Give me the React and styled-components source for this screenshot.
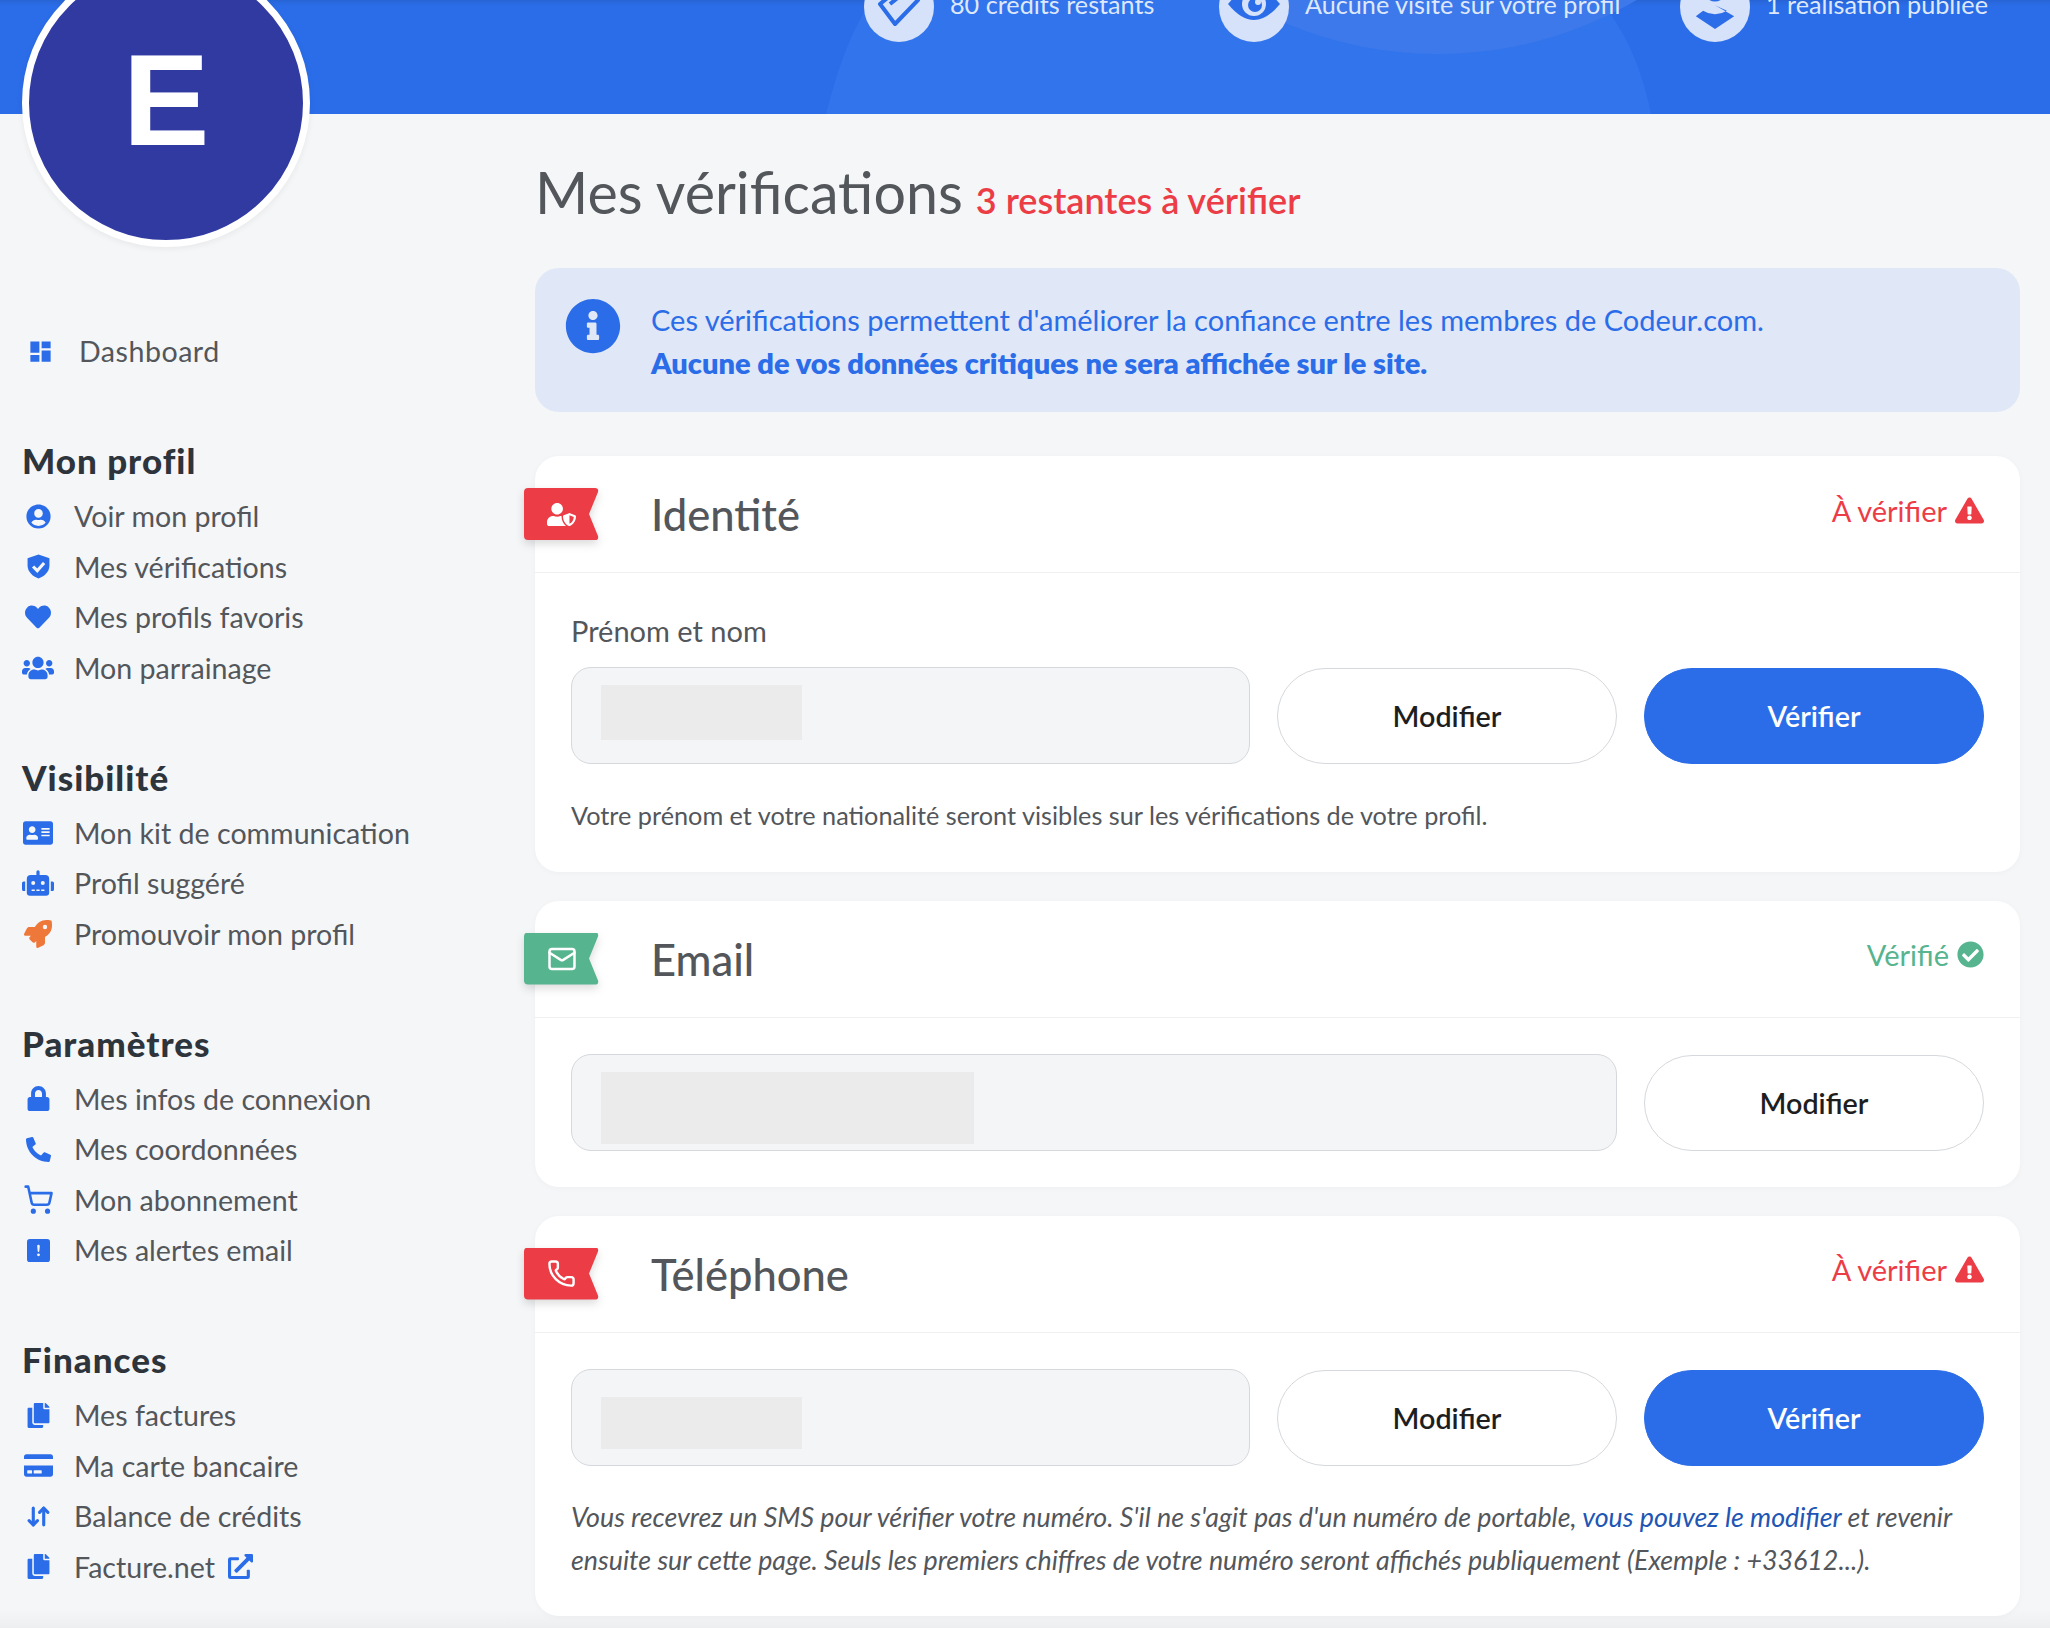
import React from 'react';
import styled, { createGlobalStyle } from 'styled-components';
import {
  FaUserCircle, FaHeart, FaUsers, FaAddressCard, FaRobot, FaRocket, FaLock, FaPhoneAlt,
  FaCopy, FaCreditCard, FaExternalLinkAlt, FaUserShield, FaExclamationTriangle,
  FaCheckCircle, FaInfoCircle,
} from 'react-icons/fa';
import { MdDashboard } from 'react-icons/md';
import { BsExclamationSquareFill } from 'react-icons/bs';
import { ShoppingCart, ArrowDownUp, Mail, Phone } from 'lucide-react';

const blue = '#2b6de8';
const red = '#ec3d47';
const green = '#56b48f';
const ink = '#53565a';
const font = `Lato, "Noto Sans", sans-serif`;

const GlobalStyle = createGlobalStyle`
  html, body { margin: 0; padding: 0; }
  body {
    background: #f5f6f8;
    font-family: ${font};
    color: ${ink};
    overflow: hidden;
  }
  * { box-sizing: border-box; }
`;

const Page = styled.div`
  width: 2050px;
  height: 1628px;
  overflow: hidden;
  background: linear-gradient(to top, #eceef0, #f5f6f8 18px);
`;

const Header = styled.header`
  position: relative;
  height: 114px;
  overflow: hidden;
  background: ${blue};
  box-shadow: inset 0 6px 5px -4px rgba(0, 0, 0, 0.1);
  display: grid;
  grid-template-columns: 355px 461px 1fr;
  padding-left: 864px;
`;

const HeaderDecor = styled.svg`
  position: absolute;
  left: 0;
  top: 0;
`;

const Stat = styled.div`
  position: relative;
  display: flex;
  align-items: center;
  gap: 16px;
  height: 70px;
  margin-top: -28px;
  font-size: 25.2px;
  color: #dfe8fb;
  white-space: nowrap;
`;

const StatText = styled.span`
  margin-top: -7px;
`;

const StatBadge = styled.div`
  width: 70px;
  height: 70px;
  flex: none;
  border-radius: 50%;
  background: #d6e2f9;
  display: flex;
  align-items: center;
  justify-content: center;
`;

const Body = styled.div`
  display: flex;
`;

const Sidebar = styled.aside`
  position: relative;
  width: 535px;
  flex: none;
  padding-left: 22px;
  margin-top: -155px;
`;

const Avatar = styled.div`
  width: 288px;
  height: 288px;
  padding-bottom: 6px;
  border-radius: 50%;
  background: #303aa1;
  border: 7px solid #fff;
  box-shadow: 0 2px 6px rgba(0, 0, 0, 0.06);
  color: #fff;
  font-family: "Liberation Sans", sans-serif;
  font-weight: 700;
  font-size: 130px;
  display: flex;
  align-items: center;
  justify-content: center;
`;

const NavItem = styled.a`
  height: 50.5px;
  display: flex;
  align-items: center;
  gap: 20px;
  font-size: 28.6px;
  color: ${ink};
  white-space: nowrap;
`;

const DashboardLink = styled(NavItem)`
  margin-top: 79px;
  padding-left: 2px;
  gap: 23px;
  letter-spacing: 0.5px;
`;

const NavIcon = styled.span`
  width: 32px;
  flex: none;
  display: flex;
  justify-content: center;
  color: ${p => p.$color || blue};
`;

const NavSection = styled.nav`
  margin-top: 63.5px;
`;

const NavTitle = styled.h3`
  margin: 0 0 11px;
  height: 40px;
  line-height: 40px;
  font-size: 35px;
  font-weight: 900;
  letter-spacing: 1px;
  color: #2e343b;
`;

const ExternalIcon = styled(FaExternalLinkAlt)`
  color: ${blue};
  margin-left: -7px;
`;

const Main = styled.main`
  width: 1485px;
  flex: none;
  padding-top: 44px;
`;

const PageTitle = styled.h1`
  margin: 0 0 43px;
  height: 67px;
  line-height: 67px;
  font-size: 57.4px;
  font-weight: 400;
  color: ${ink};
  white-space: nowrap;
`;

const Remaining = styled.span`
  margin-left: 13px;
  font-size: 36px;
  font-weight: 600;
  color: ${red};
`;

const Notice = styled.div`
  display: flex;
  align-items: flex-start;
  gap: 30px;
  height: 144px;
  padding: 30px 29px;
  margin-bottom: 44px;
  border-radius: 24px;
  background: #e0e7f6;
  color: ${blue};
  font-size: 29px;
  line-height: 43px;
`;

const NoticeIcon = styled(FaInfoCircle)`
  flex: none;
  margin-left: 1px;
`;

const Strong = styled.strong`
  font-weight: 800;
`;

const Card = styled.section`
  position: relative;
  margin-bottom: 29px;
  border-radius: 24px;
  background: #fff;
  box-shadow: 0 1px 6px rgba(30, 40, 60, 0.03);
`;

const CardHeader = styled.div`
  height: 117px;
  padding: 0 36px 0 116px;
  border-bottom: 1px solid #eff0f2;
  display: flex;
  align-items: center;
  justify-content: space-between;
`;

const CardTitle = styled.h2`
  margin: 0;
  font-size: 43.5px;
  font-weight: 500;
  color: ${ink};
`;

const Status = styled.div`
  margin-top: -8px;
  display: flex;
  align-items: center;
  gap: 8px;
  font-size: 29px;
  color: ${p => p.$color};
`;

const RibbonShadow = styled.div`
  position: absolute;
  left: -11px;
  top: 32px;
  filter: drop-shadow(0 4px 4px rgba(0, 0, 0, 0.14));
`;

const Ribbon = styled.div`
  width: 75px;
  height: 52px;
  background: ${p => p.$color};
  color: #fff;
  display: flex;
  align-items: center;
  justify-content: center;
  clip-path: path('M4 0 H71 Q75 0 74 4 L65 26 L74 48 Q75 52 71 52 H4 Q0 52 0 48 V4 Q0 0 4 0 Z');
`;

const CardBody = styled.div`
  padding: ${p => p.$top || 36}px 36px ${p => p.$bottom || 36}px;
`;

const Label = styled.div`
  height: 36px;
  line-height: 36px;
  margin-bottom: 18px;
  font-size: 29px;
`;

const FieldRow = styled.div`
  display: flex;
  gap: 27px;
`;

const Field = styled.div`
  flex: 1;
  height: 97px;
  padding-left: 29px;
  border: 1px solid #d5d8dc;
  border-radius: 20px;
  background: #f4f5f7;
`;

const Redacted = styled.div`
  width: ${p => p.$w}px;
  height: ${p => p.$h}px;
  margin-top: ${p => p.$top}px;
  background: #ebebeb;
`;

const Button = styled.button`
  width: 340px;
  height: 96px;
  margin-top: 1px;
  flex: none;
  padding: 0;
  border-radius: 48px;
  border: 1px solid ${p => (p.$primary ? blue : '#d5d8dc')};
  background: ${p => (p.$primary ? blue : '#fff')};
  color: ${p => (p.$primary ? '#fff' : '#1e1e1e')};
  font-family: ${font};
  font-size: 28.7px;
  font-weight: 600;
`;

const Hint = styled.p`
  margin: 30px 0 0;
  font-size: ${p => (p.$italic ? 26.8 : 25.25)}px;
  line-height: 43.5px;
  font-style: ${p => (p.$italic ? 'italic' : 'normal')};
  color: ${ink};
`;

const HintLink = styled.a`
  color: #2156b4;
`;

const TicketIcon = () => (
  <svg width="46" height="46" viewBox="0 0 46 46" fill="none" stroke={blue} strokeWidth="4" strokeLinejoin="round">
    <path d="M19 40 L4 20 L26 2 L42 16 Z" />
    <path d="M14 20 L24 12" />
  </svg>
);

const EyeIcon = () => (
  <svg width="56" height="46" viewBox="0 0 56 46">
    <path d="M2 20 Q28 -12 54 20 Q28 52 2 20 Z" fill={blue} />
    <circle cx="28" cy="20" r="12" fill="#d6e2f9" />
    <circle cx="29" cy="21" r="7" fill={blue} />
    <circle cx="32" cy="18" r="3" fill="#d6e2f9" />
  </svg>
);

const BadgeIcon = () => (
  <svg width="42" height="52" viewBox="0 0 46 56" fill={blue}>
    <circle cx="23" cy="10" r="12" />
    <path d="M23 26 L44 38 L23 52 L2 38 L10 32 Q23 40 36 32 Z" />
  </svg>
);

const ShieldCheckIcon = () => (
  <svg width="25" height="25" viewBox="0 0 24 24">
    <path d="M12 .5 L22.5 4 V11 C22.5 17 17.5 21.5 12 23.5 C6.5 21.5 1.5 17 1.5 11 V4 Z" fill={blue} />
    <path d="M6.8 12 L10.8 16 L17.4 8.6" fill="none" stroke="#f5f6f8" strokeWidth="3" />
  </svg>
);

const navGroups = [
  {
    title: 'Mon profil',
    items: [
      { label: 'Voir mon profil', icon: <FaUserCircle size={25} /> },
      { label: 'Mes vérifications', icon: <ShieldCheckIcon /> },
      { label: 'Mes profils favoris', icon: <FaHeart size={26} /> },
      { label: 'Mon parrainage', icon: <FaUsers size={32} /> },
    ],
  },
  {
    title: 'Visibilité',
    items: [
      { label: 'Mon kit de communication', icon: <FaAddressCard size={30} /> },
      { label: 'Profil suggéré', icon: <FaRobot size={32} /> },
      { label: 'Promouvoir mon profil', icon: <FaRocket size={28} />, color: '#ee773a' },
    ],
  },
  {
    title: 'Paramètres',
    items: [
      { label: 'Mes infos de connexion', icon: <FaLock size={25} /> },
      { label: 'Mes coordonnées', icon: <FaPhoneAlt size={25} /> },
      { label: 'Mon abonnement', icon: <ShoppingCart size={31} strokeWidth={2} /> },
      { label: 'Mes alertes email', icon: <BsExclamationSquareFill size={23} /> },
    ],
  },
  {
    title: 'Finances',
    items: [
      { label: 'Mes factures', icon: <FaCopy size={25} /> },
      { label: 'Ma carte bancaire', icon: <FaCreditCard size={29} /> },
      { label: 'Balance de crédits', icon: <ArrowDownUp size={25} strokeWidth={3} /> },
      { label: 'Facture.net', icon: <FaCopy size={25} />, external: true },
    ],
  },
];

const toVerify = (
  <Status $color={red}>
    À vérifier <FaExclamationTriangle size={29} />
  </Status>
);

const App = () => (
  <Page>
    <GlobalStyle />
    <Header>
      <HeaderDecor width="2050" height="114" viewBox="0 0 2050 114">
        <path d="M826 114 C840 60 855 20 880 -10 L1590 -10 C1620 20 1640 60 1651 114 Z" fill="#3174ec" />
        <circle cx="1438" cy="-339" r="393" fill="#3d79ea" />
      </HeaderDecor>
      <Stat><StatBadge><TicketIcon /></StatBadge><StatText>80 crédits restants</StatText></Stat>
      <Stat><StatBadge><EyeIcon /></StatBadge><StatText>Aucune visite sur votre profil</StatText></Stat>
      <Stat><StatBadge><BadgeIcon /></StatBadge><StatText>1 réalisation publiée</StatText></Stat>
    </Header>
    <Body>
      <Sidebar>
        <Avatar>E</Avatar>
        <DashboardLink>
          <NavIcon><MdDashboard size={27} /></NavIcon>
          Dashboard
        </DashboardLink>
        {navGroups.map(group => (
          <NavSection key={group.title}>
            <NavTitle>{group.title}</NavTitle>
            {group.items.map(item => (
              <NavItem key={item.label}>
                <NavIcon $color={item.color}>{item.icon}</NavIcon>
                {item.label}
                {item.external && <ExternalIcon size={25} />}
              </NavItem>
            ))}
          </NavSection>
        ))}
      </Sidebar>
      <Main>
        <PageTitle>
          Mes vérifications<Remaining>3 restantes à vérifier</Remaining>
        </PageTitle>
        <Notice>
          <NoticeIcon size={56} />
          <div>
            Ces vérifications permettent d'améliorer la confiance entre les membres de Codeur.com.
            <br />
            <Strong>Aucune de vos données critiques ne sera affichée sur le site.</Strong>
          </div>
        </Notice>

        <Card>
          <RibbonShadow>
            <Ribbon $color={red}><FaUserShield size={29} /></Ribbon>
          </RibbonShadow>
          <CardHeader>
            <CardTitle>Identité</CardTitle>
            {toVerify}
          </CardHeader>
          <CardBody $top={40} $bottom={34}>
            <Label>Prénom et nom</Label>
            <FieldRow>
              <Field><Redacted $w={201} $h={55} $top={17} /></Field>
              <Button>Modifier</Button>
              <Button $primary>Vérifier</Button>
            </FieldRow>
            <Hint>Votre prénom et votre nationalité seront visibles sur les vérifications de votre profil.</Hint>
          </CardBody>
        </Card>

        <Card>
          <RibbonShadow>
            <Ribbon $color={green}><Mail size={30} strokeWidth={2} /></Ribbon>
          </RibbonShadow>
          <CardHeader>
            <CardTitle>Email</CardTitle>
            <Status $color={green}>
              Vérifié <FaCheckCircle size={27} />
            </Status>
          </CardHeader>
          <CardBody>
            <FieldRow>
              <Field><Redacted $w={373} $h={72} $top={17} /></Field>
              <Button>Modifier</Button>
            </FieldRow>
          </CardBody>
        </Card>

        <Card>
          <RibbonShadow>
            <Ribbon $color={red}><Phone size={29} strokeWidth={2} /></Ribbon>
          </RibbonShadow>
          <CardHeader>
            <CardTitle>Téléphone</CardTitle>
            {toVerify}
          </CardHeader>
          <CardBody $bottom={33}>
            <FieldRow>
              <Field><Redacted $w={201} $h={52} $top={27} /></Field>
              <Button>Modifier</Button>
              <Button $primary>Vérifier</Button>
            </FieldRow>
            <Hint $italic>
              Vous recevrez un SMS pour vérifier votre numéro. S'il ne s'agit pas d'un numéro de portable,{' '}
              <HintLink>vous pouvez le modifier</HintLink> et revenir ensuite sur cette page. Seuls les premiers
              chiffres de votre numéro seront affichés publiquement (Exemple : +33612...).
            </Hint>
          </CardBody>
        </Card>
      </Main>
    </Body>
  </Page>
);

export default App;
